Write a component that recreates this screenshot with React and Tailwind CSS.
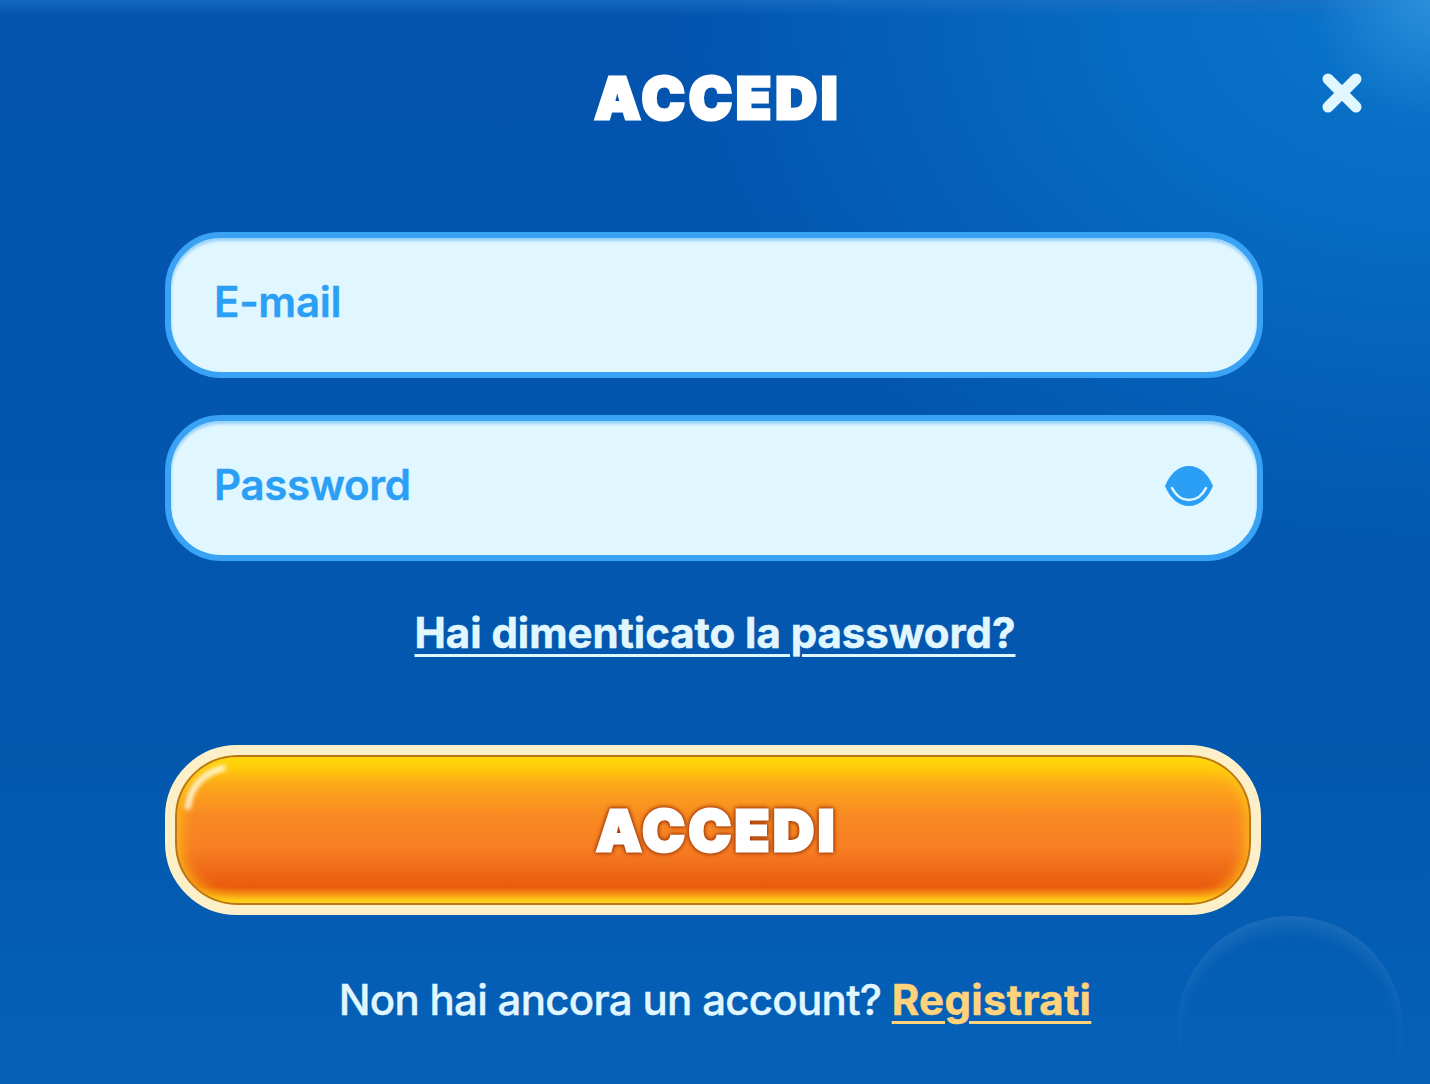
import React from 'react';

const font = "font-['Inter','Liberation_Sans',sans-serif]";

const EyeIcon = () => (
  <svg width="50" height="42" viewBox="0 0 50 42" className="shrink-0 -mt-[4px]">
    <path d="M1 21 C6 9 14 1 25 1 C36 1 44 9 49 21 C44 33 36 41 25 41 C14 41 6 33 1 21 Z" fill="#2b9ff5" />
    <path d="M8 23 C12 31 18 35 25 35 C32 35 38 31 42 23" fill="none" stroke="#e1f7ff" strokeWidth="2.5" strokeLinecap="round" />
  </svg>
);

const CloseIcon = () => (
  <svg width="40" height="40" viewBox="0 0 40 40">
    <path d="M6 6 L34 34 M34 6 L6 34" stroke="#e1f7ff" strokeWidth="11" strokeLinecap="round" />
  </svg>
);

const ButtonGloss = () => (
  <svg width="60" height="60" viewBox="0 0 60 60" className="absolute left-[2px] top-[2px] blur-[2px]">
    <path d="M11 50 C13 32 24 17 46 11" fill="none" stroke="#fffbe0" strokeWidth="6" strokeLinecap="round" opacity="0.9" />
  </svg>
);

const Field = ({ label, children }) => (
  <div className="flex h-[146px] w-[1098px] items-center justify-between rounded-[56px] border-[6px] border-[#3aa2f5] bg-[#e1f7ff] pl-[43px] pr-[43px] shadow-[inset_0_3px_3px_rgba(58,162,245,0.45)]">
    <span className="-mt-[8px] text-[42px] font-semibold tracking-[-0.3px] text-[#2b9ff5] [-webkit-text-stroke:0.4px_#2b9ff5]">{label}</span>
    {children}
  </div>
);

export default function App() {
  return (
    <div className={`${font} relative flex h-[1084px] w-[1430px] items-start overflow-hidden bg-gradient-to-b from-[#0353af] via-[#0358ae] via-70% to-[#0561b8] pl-[165px]`}>
      {/* background glow */}
      <div className="absolute inset-0 bg-[radial-gradient(ellipse_760px_560px_at_100%_0%,#0a74cb_0%,#066cc3_40%,rgba(5,98,184,0)_100%)]" />
      <div className="absolute inset-x-0 top-0 h-[16px] bg-gradient-to-b from-[#1d70c4]/70 to-transparent" />
      <div className="absolute right-0 top-0 h-[140px] w-[140px] bg-[radial-gradient(circle_at_100%_0%,#2a8fdb_0%,rgba(42,143,219,0)_60%)]" />
      {/* bubble */}
      <div className="absolute left-[1177px] top-[916px] h-[226px] w-[226px] rounded-full bg-[radial-gradient(circle,rgba(255,255,255,0)_74%,rgba(255,255,255,0.06)_100%)] shadow-[inset_0_16px_20px_-8px_rgba(255,255,255,0.12)]" />

      <button className="absolute left-[1322px] top-[73px]">
        <CloseIcon />
      </button>

      <div className="relative flex w-[1100px] flex-col items-center pt-[66px]">
        <h1 className="ml-[6px] h-[64px] text-[58px] font-black leading-[64px] tracking-[3.8px] text-white [-webkit-text-stroke:3px_white]">
          ACCEDI
        </h1>

        <div className="mt-[102px] flex flex-col gap-[37px] self-start">
          <Field label="E-mail" />
          <Field label="Password">
            <EyeIcon />
          </Field>
        </div>

        <a className="mt-[48px] text-[42px] font-bold leading-[48px] tracking-[-0.05px] text-[#e1f7ff] underline decoration-[3px] underline-offset-[6px] [-webkit-text-stroke:0.5px_#e1f7ff]">
          Hai dimenticato la password?
        </a>

        <button className="relative mt-[88px] flex h-[170px] w-[1096px] items-center justify-center self-start rounded-[72px] border-[10px] border-[#fdf0c8] bg-[linear-gradient(180deg,#ffe600_0%,#ffd008_7%,#fca71a_20%,#f98a22_40%,#f77f24_62%,#ea5a0e_88%,#f48a12_93%,#ffc91a_97%,#ffd92a_100%)] pl-[8px] shadow-[inset_0_0_0_2px_#b8761e,inset_0_0_14px_5px_rgba(255,205,20,0.8)]">
          <ButtonGloss />
          <span className="text-[57px] font-black leading-none tracking-[3.5px] text-white [-webkit-text-stroke:3px_white] [filter:drop-shadow(0_0_2px_#a63c08)_drop-shadow(0_0_1px_#a63c08)]">
            ACCEDI
          </span>
        </button>

        <p className="mt-[56px] text-[42px] font-medium leading-[58px] tracking-[-0.7px] text-[#e1f7ff] [-webkit-text-stroke:0.4px_#e1f7ff]">
          Non hai ancora un account?{' '}
          <a className="font-bold tracking-[0.3px] text-[#ffd27c] underline decoration-[3px] underline-offset-[6px] [-webkit-text-stroke:0.5px_#ffd27c]">Registrati</a>
        </p>
      </div>
    </div>
  );
}
